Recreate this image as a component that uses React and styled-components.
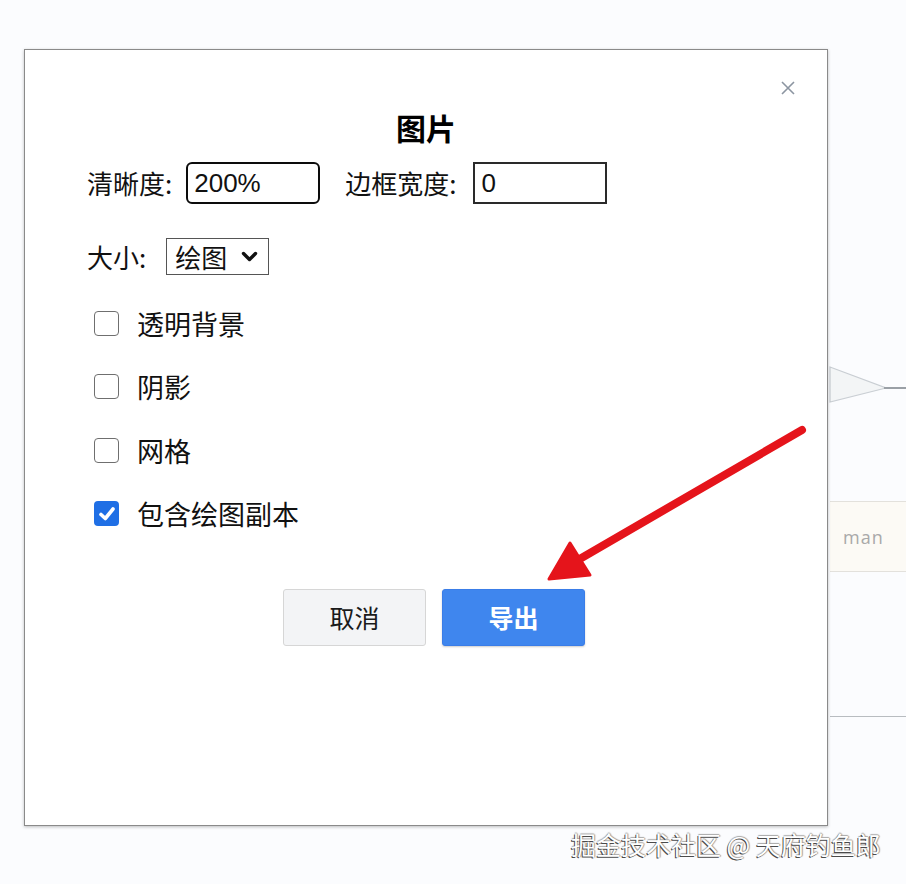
import React from 'react';
import styled, { createGlobalStyle } from 'styled-components';

const GlobalStyle = createGlobalStyle`
    html, body {
        margin: 0;
        padding: 0;
        background: #fbfcfe;
    }
    body {
        font-family: "Noto Sans CJK SC", "Liberation Sans", sans-serif;
    }
`;

const App = () => {
    return (
        <>
            <GlobalStyle />
            <STYLE_PAGE>
                <STYLE_CANVAS>
                    <STYLE_SHAPE width="80" height="50" viewBox="0 0 80 50" left={828} top={362}>
                        <polygon points="2,5 58,26 2,40" fill="#f3f5f6" stroke="#c9ced3" strokeWidth="1.2" />
                        <line x1="56" y1="26" x2="80" y2="26" stroke="#9aa0a6" strokeWidth="2" />
                    </STYLE_SHAPE>
                    <STYLE_NODE>man</STYLE_NODE>
                    <STYLE_RULE />
                </STYLE_CANVAS>

                <STYLE_DIALOG>
                    <STYLE_CLOSE aria-label="close">
                        <svg width="16" height="16" viewBox="0 0 16 16">
                            <path d="M2 2 L14 14 M14 2 L2 14" stroke="#8c95a1" strokeWidth="1.6" fill="none" />
                        </svg>
                    </STYLE_CLOSE>
                    <STYLE_TITLE>图片</STYLE_TITLE>

                    <STYLE_FORM>
                        <STYLE_ROW>
                            <STYLE_LABEL>清晰度:</STYLE_LABEL>
                            <STYLE_INPUT focused defaultValue="200%" />
                            <STYLE_LABEL gap={25} space={17}>边框宽度:</STYLE_LABEL>
                            <STYLE_INPUT defaultValue="0" />
                        </STYLE_ROW>

                        <STYLE_ROW top={34}>
                            <STYLE_LABEL>大小:</STYLE_LABEL>
                            <STYLE_SELECT>
                                绘图
                                <svg width="17" height="12" viewBox="0 0 17 12">
                                    <path d="M2.5 2.5 L8.5 8.5 L14.5 2.5" stroke="#111" strokeWidth="3.4" fill="none" strokeLinecap="round" strokeLinejoin="round" />
                                </svg>
                            </STYLE_SELECT>
                        </STYLE_ROW>

                        <STYLE_CHECKS>
                            <Check label="透明背景" />
                            <Check label="阴影" />
                            <Check label="网格" />
                            <Check label="包含绘图副本" checked />
                        </STYLE_CHECKS>
                    </STYLE_FORM>

                    <STYLE_BUTTONS>
                        <STYLE_BUTTON>取消</STYLE_BUTTON>
                        <STYLE_BUTTON primary>导出</STYLE_BUTTON>
                    </STYLE_BUTTONS>
                </STYLE_DIALOG>

                <STYLE_ARROW width="906" height="884" viewBox="0 0 906 884">
                    <line x1="802" y1="430" x2="578" y2="560" stroke="#e5141b" strokeWidth="8" strokeLinecap="round" />
                    <polygon points="549,579 570,543 590,575" fill="#e5141b" stroke="#e5141b" strokeWidth="3" strokeLinejoin="round" />
                </STYLE_ARROW>

                <STYLE_MARK>掘金技术社区 @ 天府钓鱼郎</STYLE_MARK>
            </STYLE_PAGE>
        </>
    );
};

const Check = ({ label, checked }) => (
    <STYLE_CHECK_ROW>
        <STYLE_BOX checked={checked}>
            {checked && (
                <svg width="20" height="20" viewBox="0 0 20 20">
                    <path d="M4 10.5 L8.3 14.5 L16 5" stroke="#fff" strokeWidth="3.6" fill="none" strokeLinecap="round" strokeLinejoin="round" />
                </svg>
            )}
        </STYLE_BOX>
        <span>{label}</span>
    </STYLE_CHECK_ROW>
);

const STYLE_PAGE = styled.div`
    position: relative;
    width: 906px;
    height: 884px;
    overflow: hidden;
    background: #fbfcfe;
`;

const STYLE_CANVAS = styled.div`
    position: absolute;
    inset: 0;
`;

const STYLE_SHAPE = styled.svg`
    position: absolute;
    left: ${p => p.left}px;
    top: ${p => p.top}px;
`;

const STYLE_NODE = styled.div`
    position: absolute;
    left: 830px;
    top: 501px;
    width: 90px;
    height: 71px;
    box-sizing: border-box;
    padding-left: 13px;
    display: flex;
    align-items: center;
    background: #fcfaf5;
    border-top: 1px solid #e3e1dc;
    border-bottom: 1px solid #e3e1dc;
    color: #a9a9a9;
    font-family: "Open Sans", "Liberation Sans", sans-serif;
    font-size: 18px;
    letter-spacing: 1px;
`;

const STYLE_RULE = styled.div`
    position: absolute;
    left: 830px;
    top: 716px;
    width: 80px;
    height: 1px;
    background: #b8bcc0;
`;

const STYLE_DIALOG = styled.div`
    position: absolute;
    left: 24px;
    top: 49px;
    width: 804px;
    height: 777px;
    box-sizing: border-box;
    padding-top: 59px;
    background: #fff;
    border: 1px solid #8a8a8a;
    box-shadow: 0 1px 3px rgba(0, 0, 0, 0.25);
    display: flex;
    flex-direction: column;
    color: #111;
`;

const STYLE_CLOSE = styled.div`
    position: absolute;
    top: 30px;
    right: 31px;
    width: 16px;
    height: 16px;
    display: flex;
`;

const STYLE_TITLE = styled.h2`
    margin: 0;
    text-align: center;
    font-size: 30px;
    line-height: 36px;
    font-weight: 700;
    color: #000;
`;

const STYLE_FORM = styled.div`
    padding-left: 62px;
    margin-top: 17px;
    display: flex;
    flex-direction: column;
`;

const STYLE_ROW = styled.div`
    display: flex;
    align-items: center;
    margin-top: ${p => p.top || 0}px;
`;

const STYLE_LABEL = styled.span`
    font-size: 26px;
    line-height: 34px;
    margin-left: ${p => p.gap || 0}px;
    margin-right: ${p => p.space || 14}px;
    color: #111;
`;

const STYLE_INPUT = styled.input`
    width: 134px;
    height: 42px;
    box-sizing: border-box;
    padding: 0 6px;
    border: 2px solid ${p => (p.focused ? '#0c0c0c' : '#2a2a2a')};
    border-radius: ${p => (p.focused ? '6px' : '0')};
    outline: none;
    background: #fff;
    font-family: "Liberation Sans", "Noto Sans CJK SC", sans-serif;
    font-size: 26px;
    color: #111;
`;

const STYLE_SELECT = styled.div`
    width: 103px;
    height: 37px;
    box-sizing: border-box;
    margin-left: 6px;
    padding: 0 10px 0 8px;
    border: 1px solid #555;
    display: flex;
    align-items: center;
    justify-content: space-between;
    font-size: 26px;
    color: #111;
`;

const STYLE_CHECKS = styled.div`
    margin-top: 28px;
    padding-left: 7px;
    display: flex;
    flex-direction: column;
    gap: 23.5px;
`;

const STYLE_CHECK_ROW = styled.label`
    height: 40px;
    display: flex;
    align-items: center;
    gap: 18px;
    font-size: 27px;
    color: #111;
`;

const STYLE_BOX = styled.span`
    width: 25px;
    height: 25px;
    box-sizing: border-box;
    border-radius: 4px;
    border: ${p => (p.checked ? 'none' : '1.5px solid #6f6f6f')};
    background: ${p => (p.checked ? '#1f6fe5' : '#fff')};
    display: flex;
    align-items: center;
    justify-content: center;
`;

const STYLE_BUTTONS = styled.div`
    margin-top: 55px;
    padding-left: 258px;
    display: flex;
    gap: 16px;
`;

const STYLE_BUTTON = styled.button`
    width: 143px;
    height: 57px;
    border-radius: 3px;
    border: 1px solid ${p => (p.primary ? '#3a7de8' : '#d6d6d6')};
    background: ${p => (p.primary ? '#3f86ee' : '#f3f4f6')};
    color: ${p => (p.primary ? '#fff' : '#1a1a1a')};
    font-family: "Noto Sans CJK SC", sans-serif;
    font-size: 25px;
    font-weight: ${p => (p.primary ? 700 : 400)};
    box-shadow: ${p => (p.primary ? '0 1px 2px rgba(0,0,0,0.2)' : 'none')};
`;

const STYLE_ARROW = styled.svg`
    position: absolute;
    left: 0;
    top: 0;
    pointer-events: none;
`;

const STYLE_MARK = styled.div`
    position: absolute;
    left: 571px;
    top: 827px;
    font-size: 25px;
    line-height: 34px;
    color: #fff;
    text-shadow: -1px 1px 0 #4a4a4a, 1px 0 1px #999, 0 -1px 1px #aaa;
`;

export default App;
